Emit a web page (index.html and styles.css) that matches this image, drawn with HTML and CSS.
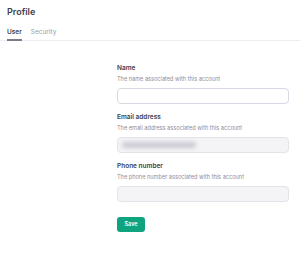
FILE: index.html
```html
<!DOCTYPE html>
<html>
<head>
    <title>Profile</title>
    <link rel="stylesheet" href="styles.css">
</head>
<body>
    <div class="header">
        <h1>Profile</h1>
        <div class="tabs">
            <a href="#" class="tab active">User</a>
            <a href="#" class="tab">Security</a>
        </div>
    </div>

    <div class="container">
        <form class="profile-form">
            <div class="field">
                <label for="name">Name</label>
                <div class="hint">The name associated with this account</div>
                <input type="text" id="name" class="input">
            </div>
            <div class="field">
                <label for="email">Email address</label>
                <div class="hint">The email address associated with this account</div>
                <div class="input disabled">
                    <span class="redacted"></span>
                </div>
            </div>
            <div class="field">
                <label for="phone">Phone number</label>
                <div class="hint">The phone number associated with this account</div>
                <input type="text" id="phone" class="input disabled" disabled>
            </div>
            <button type="button" class="button">Save</button>
        </form>
    </div>
</body>
</html>
```

FILE: styles.css
```css
body {
    font-family: Inter, "Liberation Sans", sans-serif;
    background-color: white;
    color: #353740;
    margin: 0;
    padding: 0;
}
.header {
    padding: 6px 0 0;
}
.header h1 {
    margin: 0 7px;
    font-size: 9px;
    line-height: 12px;
    font-weight: 600;
    color: #40414f;
}
.tabs {
    display: flex;
    gap: 9px;
    margin-top: 9px;
    padding: 0 7px;
    border-bottom: 1px solid #ececf1;
}
.tab {
    font-size: 6.5px;
    line-height: 10px;
    padding-bottom: 2px;
    margin-bottom: -1px;
    color: #9a9aa8;
    text-decoration: none;
    border-bottom: 2px solid transparent;
}
.tab.active {
    color: #40414f;
    font-weight: 600;
    border-bottom-color: #7a7a88;
}
.container {
    padding: 22px 10px 0 117px;
}
.field {
    display: flex;
    flex-direction: column;
    margin-bottom: 8px;
}
.field label {
    font-size: 6.5px;
    line-height: 10px;
    font-weight: 600;
    color: #40414f;
}
.hint {
    margin-top: 2px;
    font-size: 5.6px;
    line-height: 8px;
    color: #8e8ea0;
}
.input {
    box-sizing: border-box;
    margin-top: 5px;
    width: 172px;
    height: 16px;
    border: 1px solid #d9d9e3;
    border-radius: 4px;
    background-color: white;
    padding: 0 4px;
    display: flex;
    align-items: center;
}
.input.disabled {
    background-color: #f4f4f6;
    border-color: #e3e3ea;
}
.redacted {
    display: block;
    width: 74px;
    height: 6px;
    border-radius: 3px;
    background-color: #c9c9d2;
    filter: blur(2px);
}
.button {
    margin-top: 5px;
    padding: 0;
    width: 28px;
    height: 15px;
    background-color: #10a37f;
    color: white;
    border: none;
    border-radius: 3px;
    font-family: inherit;
    font-size: 5.5px;
    font-weight: 600;
    cursor: pointer;
}
```
